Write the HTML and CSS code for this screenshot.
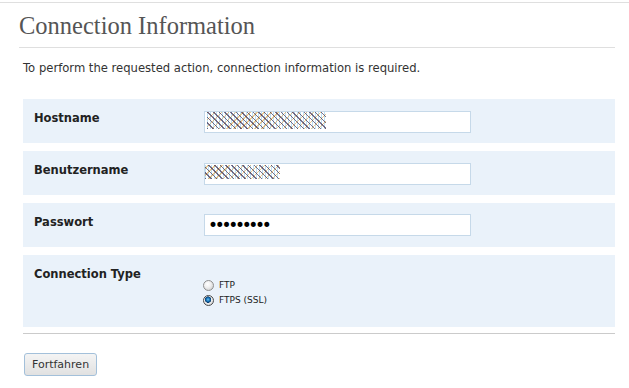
FILE: index.html
```html
<!DOCTYPE html>
<html lang="de">
<head>
  <meta charset="utf-8" />
  <title>Connection Information</title>
  <link rel="stylesheet" href="styles.css">
</head>
<body>
  <div class="wrap">
    <h2>Connection Information</h2>
    <div class="content">
      <p class="intro">To perform the requested action, connection information is required.</p>
      <form class="cred-form">
        <div class="form-table">
          <div class="row">
            <label class="row-label" for="hostname">Hostname</label>
            <div class="field">
              <input type="text" id="hostname" value="" />
              <span class="blur blur-host"></span>
            </div>
          </div>
          <div class="row">
            <label class="row-label" for="username">Benutzername</label>
            <div class="field">
              <input type="text" id="username" value="" />
              <span class="blur blur-user"></span>
            </div>
          </div>
          <div class="row">
            <label class="row-label" for="password">Passwort</label>
            <div class="field">
              <input type="password" id="password" value="123456789" />
            </div>
          </div>
          <div class="row row-type">
            <span class="row-label">Connection Type</span>
            <div class="radios">
              <label class="radio"><input type="radio" name="ctype" value="ftp" /> FTP</label>
              <label class="radio"><input type="radio" name="ctype" value="ftps" checked /> FTPS (SSL)</label>
            </div>
          </div>
        </div>
        <div class="submit-row">
          <button type="submit" class="button">Fortfahren</button>
        </div>
      </form>
    </div>
  </div>
</body>
</html>
```

FILE: styles.css
```css
:root {
  --row-bg: #eaf2fa;
  --border: #dfdfdf;
  --input-border: #c6d9e9;
  --text: #333;
}
html, body {
  margin: 0;
  padding: 0;
  background: #fff;
  color: var(--text);
  font-family: "DejaVu Sans", Verdana, sans-serif;
}
body {
  padding-top: 2px;
}
.wrap {
  border-top: 1px solid var(--border);
  padding: 0 14px 0 19px;
}
h2 {
  margin: 0;
  padding: 8px 0 7px 0;
  font-family: "Liberation Serif", Georgia, serif;
  font-weight: 400;
  font-size: 24.5px;
  line-height: 29px;
  color: #555;
  border-bottom: 1px solid var(--border);
}
.content {
  padding-left: 4px;
}
.intro {
  margin: 13px 0 23px 0;
  font-size: 11.6px;
  line-height: 15px;
  color: #333;
}
.form-table {
  display: flex;
  flex-direction: column;
  gap: 8px;
}
.row {
  display: flex;
  background: var(--row-bg);
  padding: 11px 11px;
}
.row-label {
  width: 170px;
  flex: none;
  font-size: 11.5px;
  font-weight: 700;
  line-height: 17px;
  color: #222;
}
.field {
  position: relative;
  width: 267px;
  height: 22px;
}
.field input {
  box-sizing: border-box;
  width: 267px;
  height: 22px;
  margin: 0;
  padding: 0 4px;
  border: 1px solid var(--input-border);
  border-radius: 0;
  background: #fff;
  font-family: "DejaVu Sans", Verdana, sans-serif;
  font-size: 11px;
  color: #000;
  outline: none;
}
.field input[type=password] {
  font-size: 17px;
  letter-spacing: -3.3px;
  padding-left: 3px;
}
/* pixelated (censored) values lying over the inputs */
.blur {
  position: absolute;
  top: 2px;
  height: 17px;
  background-image:
    repeating-linear-gradient(45deg, rgba(40, 20, 60, 0.6) 0 1px, transparent 1px 4px),
    repeating-linear-gradient(-45deg, rgba(220, 150, 40, 0.5) 0 1px, transparent 1px 5px),
    repeating-linear-gradient(90deg, rgba(110, 190, 230, 0.45) 0 1px, transparent 1px 3px);
}
.blur-host {
  left: 3px;
  width: 119px;
}
.blur-user {
  left: 1px;
  top: 3px;
  height: 14px;
  width: 75px;
}
.row-type {
  padding-bottom: 19px;
}
.radios {
  display: flex;
  flex-direction: column;
  padding-top: 12px;
  margin-left: -1px;
}
.radio {
  display: flex;
  align-items: center;
  gap: 5px;
  font-size: 9px;
  line-height: 15px;
  color: #222;
}
.radio input {
  appearance: none;
  -webkit-appearance: none;
  width: 11px;
  height: 11px;
  margin: 0;
  border: 1px solid #8f8f8f;
  border-radius: 50%;
  background: radial-gradient(circle at 40% 35%, #fff 0, #f0f0f0 40%, #c4c4c4 100%);
  box-sizing: border-box;
}
.radio input:checked {
  border-color: #4a4a4a;
  background:
    radial-gradient(circle at 45% 40%, #6fc4f2 0, #1b7ac0 1.6px, #0c3e6e 3px, transparent 3.4px),
    radial-gradient(circle at 40% 35%, #fff 0, #eee 50%, #c8c8c8 100%);
}
.submit-row {
  margin-top: 6px;
  border-top: 1px solid #cbcbcb;
  padding-top: 19px;
}
.button {
  height: 23px;
  margin: 0 0 0 1px;
  padding: 0 7px;
  border: 1px solid #a3c0da;
  border-radius: 3px;
  background: linear-gradient(#f4f4f4, #e1e1e1);
  font-family: "DejaVu Sans", Verdana, sans-serif;
  font-size: 11px;
  color: #333;
  cursor: pointer;
}
```
